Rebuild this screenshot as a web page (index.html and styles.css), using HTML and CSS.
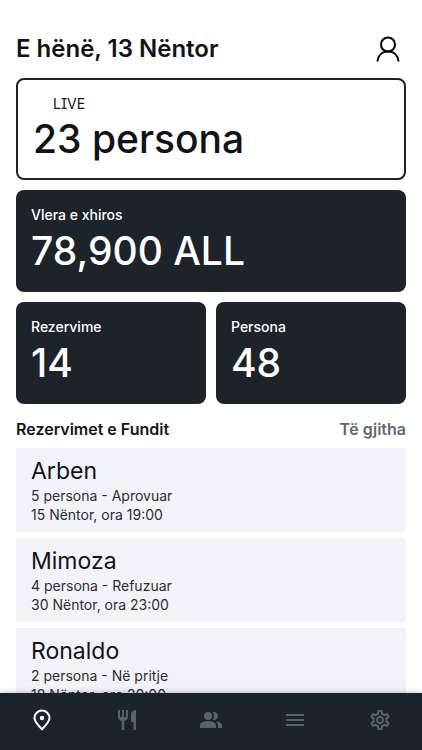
FILE: index.html
```html
<!DOCTYPE html>
<html lang="sq">
<head>
<meta charset="utf-8">
<meta name="viewport" content="width=device-width, initial-scale=1">
<title>Rezervimet</title>
<link rel="stylesheet" href="styles.css">
</head>
<body>
<main class="content">
  <header class="top">
    <h1 class="date">E hënë, 13 Nëntor</h1>
    <button class="profile" type="button" aria-label="Profili">
      <svg width="24" height="26" viewBox="0 0 24 26" fill="none" stroke="currentColor" stroke-width="2"><circle cx="12" cy="8.500" r="7"/><path d="M1.500 25.500C2 19.500 6 15.500 12 15.500S22 19.500 22.500 25.500"/></svg>
    </button>
  </header>

  <section class="stats">
    <article class="card live">
      <p class="live-label">LIVE</p>
      <p class="value">23 persona</p>
    </article>
    <article class="card wide">
      <p class="label">Vlera e xhiros</p>
      <p class="value">78,900 ALL</p>
    </article>
    <article class="card">
      <p class="label">Rezervime</p>
      <p class="value">14</p>
    </article>
    <article class="card">
      <p class="label">Persona</p>
      <p class="value">48</p>
    </article>
  </section>

  <div class="section-head">
    <h2 class="section-title">Rezervimet e Fundit</h2>
    <a class="all" href="#">Të gjitha</a>
  </div>

  <ul class="list">
    <li class="item">
      <h3 class="name">Arben</h3>
      <p class="detail">5 persona - Aprovuar</p>
      <p class="detail">15 Nëntor, ora 19:00</p>
    </li>
    <li class="item">
      <h3 class="name">Mimoza</h3>
      <p class="detail">4 persona - Refuzuar</p>
      <p class="detail">30 Nëntor, ora 23:00</p>
    </li>
    <li class="item">
      <h3 class="name">Ronaldo</h3>
      <p class="detail">2 persona - Në pritje</p>
      <p class="detail">18 Nëntor, ora 20:00</p>
    </li>
  </ul>
</main>

<nav class="tabs">
  <a class="tab active" href="#" aria-label="Kryefaqja">
    <svg width="24" height="24" viewBox="0 0 24 24" fill="none" stroke="currentColor" stroke-width="2"><path d="M12 21.200C8 17.300 4.500 13.600 4.500 10a7.500 7.500 0 0 1 15 0c0 3.600-3.500 7.300-7.500 11.200z"/><circle cx="12" cy="10" r="2.200" fill="currentColor" stroke="none"/></svg>
  </a>
  <a class="tab" href="#" aria-label="Menuja">
    <svg width="24" height="24" viewBox="0 0 24 24" fill="currentColor"><path d="M11 9H9V2H7v7H5V2H3v7c0 2.120 1.660 3.840 3.750 3.970V22h2.500v-9.030C11.340 12.840 13 11.120 13 9V2h-2v7zM16 6v8h2.500v8H21V2c-2.760 0-5 2.240-5 4z"/></svg>
  </a>
  <a class="tab" href="#" aria-label="Klientët">
    <svg width="24" height="24" viewBox="0 0 24 24" fill="currentColor"><circle cx="9" cy="8" r="4"/><path d="M9 13c-2.670 0-8 1.340-8 4v3h16v-3c0-2.660-5.330-4-8-4zM15 12c2.210 0 4-1.790 4-4s-1.790-4-4-4c-.47 0-.91.100-1.330.240A5.980 5.980 0 0 1 15 8c0 1.430-.5 2.740-1.330 3.760.42.140.86.240 1.330.240zM16.670 13.130C18.040 14.060 19 15.320 19 17v3h4v-3c0-2.180-3.580-3.470-6.330-3.870z"/></svg>
  </a>
  <a class="tab" href="#" aria-label="Lista">
    <svg width="24" height="24" viewBox="0 0 24 24" fill="currentColor"><path d="M3 6h18v2H3zM3 11h18v2H3zM3 16h18v2H3z"/></svg>
  </a>
  <a class="tab" href="#" aria-label="Cilësimet">
    <svg width="24" height="24" viewBox="0 0 24 24" fill="currentColor"><path d="M19.430 12.980c.04-.32.070-.64.070-.98 0-.34-.03-.66-.07-.98l2.110-1.650c.19-.15.240-.42.120-.64l-2-3.460a.5.5 0 0 0-.61-.22l-2.490 1c-.52-.4-1.080-.73-1.690-.98l-.38-2.650A.488.488 0 0 0 14 2h-4c-.25 0-.46.180-.49.420l-.38 2.650c-.61.250-1.170.590-1.690.980l-2.490-1a.5.5 0 0 0-.61.220l-2 3.460c-.13.220-.07.490.120.640l2.110 1.650c-.04.320-.07.650-.07.980s.03.660.070.980l-2.110 1.650c-.19.150-.24.420-.12.640l2 3.460c.12.220.390.300.61.220l2.490-1c.52.400 1.080.730 1.690.980l.38 2.650c.03.240.240.420.490.420h4c.25 0 .46-.18.490-.42l.38-2.650c.61-.25 1.170-.59 1.690-.98l2.490 1c.22.080.490 0 .61-.22l2-3.460c.12-.22.070-.49-.12-.64l-2.110-1.650zm-1.980-1.710c.04.310.050.520.050.730s-.02.430-.05.730l-.14 1.130.89.700 1.080.840-.7 1.210-1.270-.51-1.040-.42-.9.680c-.43.320-.84.560-1.250.730l-1.060.430-.16 1.130-.2 1.350h-1.400l-.35-2.480-1.060-.43c-.43-.18-.83-.41-1.230-.71l-.91-.7-1.060.430-1.270.510-.7-1.210 1.970-1.540-.14-1.130c-.03-.31-.05-.54-.05-.74s.02-.43.050-.73l.14-1.130-1.970-1.540.7-1.210 1.270.510 1.040.420.900-.68c.43-.32.840-.56 1.250-.73l1.060-.43.360-2.480h1.390l.35 2.480 1.060.430c.43.180.83.410 1.230.710l.91.700 2.330-.94.700 1.210-1.970 1.540.15 1.130zM12 8c-2.210 0-4 1.790-4 4s1.790 4 4 4 4-1.790 4-4-1.790-4-4-4zm0 6a2 2 0 1 1 0-4 2 2 0 0 1 0 4z"/></svg>
  </a>
</nav>
</body>
</html>
```
FILE: styles.css
```css
* {
  box-sizing: border-box;
  margin: 0;
  padding: 0;
}

body {
  display: flex;
  flex-direction: column;
  height: 100vh;
  background: #fff;
  color: #111417;
  font-family: Inter, "Liberation Sans", sans-serif;
}

.content {
  flex: 1;
  min-height: 0;
  overflow: hidden;
  padding: 32px 16px 0;
}

.top {
  display: flex;
  align-items: center;
  justify-content: space-between;
  height: 34px;
  margin-bottom: 12px;
}

.date {
  font-size: 24px;
  font-weight: 600;
  line-height: 34px;
}

.profile {
  display: flex;
  padding: 0 6px;
  border: 0;
  background: none;
  color: #000;
}

.stats {
  display: grid;
  grid-template-columns: 1fr 1fr;
  gap: 10px;
}

.card {
  height: 102px;
  padding: 15px;
  border-radius: 8px;
  background: #1c2329;
  color: #fff;
}

.live {
  grid-column: 1 / -1;
  border: 2px solid #1c2329;
  background: #fff;
  color: #111417;
}

.wide {
  grid-column: 1 / -1;
}

.label {
  font-size: 14px;
  font-weight: 500;
  line-height: 20px;
}

.live-label {
  padding-left: 20px;
  font-size: 14px;
  line-height: 18px;
  font-feature-settings: "cv08";
}

.value {
  font-size: 39px;
  font-weight: 500;
  line-height: 52px;
}

.section-head {
  display: flex;
  align-items: center;
  justify-content: space-between;
  height: 44px;
  padding-top: 6px;
}

.section-title,
.all {
  font-size: 16px;
  font-weight: 600;
  line-height: 24px;
}

.all {
  color: #5d6871;
  text-decoration: none;
}

.list {
  display: flex;
  flex-direction: column;
  gap: 6px;
  list-style: none;
}

.item {
  padding: 8px 15px;
  background: #f2f3f8;
}

.name {
  font-size: 23px;
  font-weight: 400;
  line-height: 30px;
}

.detail {
  color: #2b2e32;
  font-size: 14px;
  line-height: 19px;
}

.tabs {
  display: grid;
  grid-template-columns: repeat(5, 1fr);
  height: 57px;
  padding-bottom: 3px;
  background: #1c2329;
  box-shadow: 0 0 6px rgba(0, 0, 0, 0.3);
}

.tab {
  display: flex;
  align-items: center;
  justify-content: center;
  color: #56636e;
}

.active {
  color: #fff;
}
```
